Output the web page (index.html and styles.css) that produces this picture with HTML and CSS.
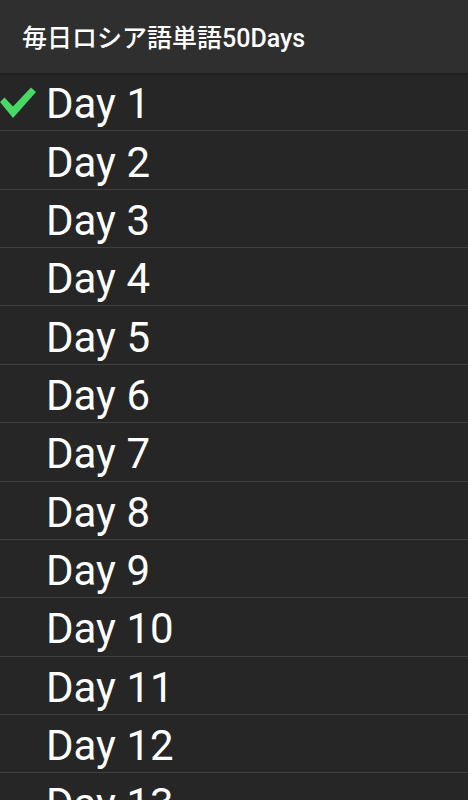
FILE: index.html
```html
<!DOCTYPE html>
<html lang="ja">
<head>
<meta charset="utf-8">
<title>毎日ロシア語単語50Days</title>
<link rel="stylesheet" href="styles.css">
</head>
<body>
<header class="appbar">
  <h1 class="title">毎日ロシア語単語50Days</h1>
</header>
<ul class="days">
  <li class="day"><span class="mark"><svg class="check" width="36" height="32" viewBox="0 0 36 32"><polygon points="0,15 4.5,10.5 13,19.5 31,0.5 36,5 13,31" fill="#4ad865"/></svg></span><span class="label">Day 1</span></li>
  <li class="day"><span class="mark"></span><span class="label">Day 2</span></li>
  <li class="day"><span class="mark"></span><span class="label">Day 3</span></li>
  <li class="day"><span class="mark"></span><span class="label">Day 4</span></li>
  <li class="day"><span class="mark"></span><span class="label">Day 5</span></li>
  <li class="day"><span class="mark"></span><span class="label">Day 6</span></li>
  <li class="day"><span class="mark"></span><span class="label">Day 7</span></li>
  <li class="day"><span class="mark"></span><span class="label">Day 8</span></li>
  <li class="day"><span class="mark"></span><span class="label">Day 9</span></li>
  <li class="day"><span class="mark"></span><span class="label">Day 10</span></li>
  <li class="day"><span class="mark"></span><span class="label">Day 11</span></li>
  <li class="day"><span class="mark"></span><span class="label">Day 12</span></li>
  <li class="day"><span class="mark"></span><span class="label">Day 13</span></li>
</ul>
</body>
</html>
```
FILE: styles.css
```css
html, body {
  margin: 0;
  padding: 0;
  background: #262626;
  overflow: hidden;
}
body {
  width: 468px;
  height: 800px;
  font-family: Roboto, "Noto Sans CJK JP", sans-serif;
  color: #ffffff;
}
.appbar {
  height: 73px;
  background: #2f2f2f;
  display: flex;
  align-items: center;
  padding-left: 22px;
  box-shadow: 0 1px 3px rgba(0,0,0,0.35);
  position: relative;
  z-index: 1;
}
.title {
  margin: 0;
  font-size: 25px;
  font-weight: 500;
  letter-spacing: 0;
  padding-bottom: 2px;
}
.days {
  list-style: none;
  margin: 0;
  padding: 0;
}
.day {
  height: 57.36px;
  border-bottom: 1px solid #3f3f3f;
  display: flex;
  align-items: center;
  box-sizing: content-box;
}
.mark {
  width: 46px;
  flex: none;
  display: flex;
  align-items: center;
  padding-top: 3px;
}
.check {
  display: block;
}
.label {
  font-size: 42px;
  line-height: 1;
  padding-top: 5px;
}
```
